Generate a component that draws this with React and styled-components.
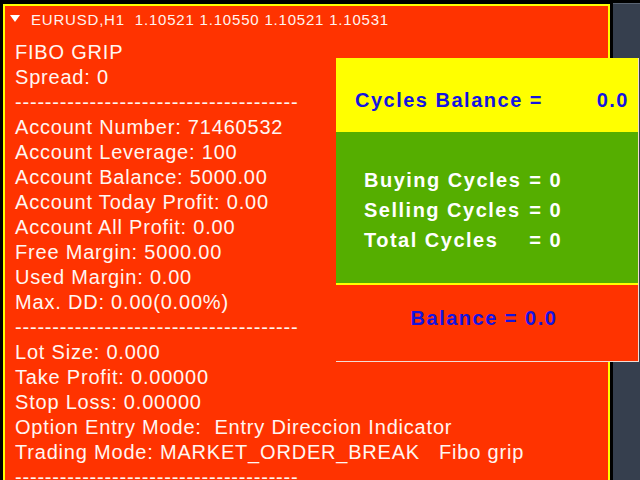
import React from "react";
import styled, { createGlobalStyle } from "styled-components";

const GlobalStyle = createGlobalStyle`
  html, body {
    margin: 0;
    padding: 0;
    background: #000;
    overflow: hidden;
  }
  #root {
    width: 640px;
    height: 480px;
  }
`;

const Page = styled.div`
  position: relative;
  display: flex;
  width: 640px;
  height: 480px;
  background: #000;
  overflow: hidden;
`;

const ChartArea = styled.div`
  flex: none;
  width: 613px;
  height: 100%;
  box-sizing: border-box;
  padding: 4px 3px 0 3px;
`;

const ChartWindow = styled.div`
  height: 100%;
  box-sizing: border-box;
  border: 2px solid #ffff00;
  border-bottom: none;
  background: #ff3300;
  display: flex;
  flex-direction: column;
  overflow: hidden;
`;

const Header = styled.div`
  flex: none;
  display: flex;
  align-items: center;
  height: 26px;
  padding-left: 5px;
  gap: 11px;
  font-family: "Liberation Sans", Arial, sans-serif;
  font-size: 15px;
  letter-spacing: 0.8px;
  color: #fff4f0;
  white-space: pre;
`;

const Triangle = styled.svg`
  width: 10px;
  height: 8px;
  flex: none;
`;

const InfoList = styled.div`
  flex: none;
  padding: 8px 0 0 10px;
  display: flex;
  flex-direction: column;
  font-family: "Liberation Sans", Arial, sans-serif;
  font-size: 20px;
  line-height: 25px;
  letter-spacing: 0.8px;
  color: #fff6f2;
  white-space: pre;
`;

const InfoLine = styled.div`
  flex: none;
  height: 25px;
`;

const SideStrip = styled.div`
  flex: 1;
  background: #363f4e;
  border-top: 1px solid #5a6473;
  margin-top: 3px;
`;

const Overlay = styled.div`
  position: absolute;
  left: 336px;
  top: 58px;
  width: 302px;
  display: flex;
  flex-direction: column;
  border-right: 1px solid #f3ddd4;
  border-bottom: 1px solid #f3ddd4;
  font-family: "Liberation Sans", Arial, sans-serif;
  font-weight: bold;
  font-size: 20px;
  letter-spacing: 1.5px;
`;

const BalanceBar = styled.div`
  height: 74px;
  box-sizing: border-box;
  background: #ffff00;
  padding: 30px 9px 0 19px;
  display: flex;
  justify-content: space-between;
  line-height: 24px;
  color: #1414e0;
`;

const CyclesBox = styled.div`
  height: 153px;
  box-sizing: border-box;
  background: #55ae00;
  border-bottom: 2px solid #ffff00;
  padding: 33px 0 0 28px;
  display: grid;
  grid-template-columns: auto auto;
  justify-content: start;
  align-content: start;
  column-gap: 8px;
  line-height: 30px;
  color: #ffffff;
`;

const Cell = styled.div`
  white-space: pre;
`;

const TotalBox = styled.div`
  height: 76px;
  box-sizing: border-box;
  background: #ff3300;
  padding: 21px 6px 0 0;
  text-align: center;
  line-height: 24px;
  color: #1414e0;
`;

const DASHES = "-".repeat(38);

const lines = [
  "FIBO GRIP",
  "Spread: 0",
  DASHES,
  "Account Number: 71460532",
  "Account Leverage: 100",
  "Account Balance: 5000.00",
  "Account Today Profit: 0.00",
  "Account All Profit: 0.00",
  "Free Margin: 5000.00",
  "Used Margin: 0.00",
  "Max. DD: 0.00(0.00%)",
  DASHES,
  "Lot Size: 0.000",
  "Take Profit: 0.00000",
  "Stop Loss: 0.00000",
  "Option Entry Mode:  Entry Direccion Indicator",
  "Trading Mode: MARKET_ORDER_BREAK   Fibo grip",
  DASHES,
];

const cycles = [
  ["Buying Cycles", "= 0"],
  ["Selling Cycles", "= 0"],
  ["Total Cycles", "= 0"],
];

export default function App() {
  return (
    <>
      <GlobalStyle />
      <Page>
        <ChartArea>
          <ChartWindow>
            <Header>
              <Triangle viewBox="0 0 10 8">
                <polygon points="0,0 10,0 5,7" fill="#ffffff" />
              </Triangle>
              <span>EURUSD,H1  1.10521 1.10550 1.10521 1.10531</span>
            </Header>
            <InfoList>
              {lines.map((l, i) => (
                <InfoLine key={i}>{l}</InfoLine>
              ))}
            </InfoList>
          </ChartWindow>
        </ChartArea>
        <SideStrip />
        <Overlay>
          <BalanceBar>
            <span>Cycles Balance =</span>
            <span>0.0</span>
          </BalanceBar>
          <CyclesBox>
            {cycles.map(([label, val]) => (
              <React.Fragment key={label}>
                <Cell>{label}</Cell>
                <Cell>{val}</Cell>
              </React.Fragment>
            ))}
          </CyclesBox>
          <TotalBox>Balance = 0.0</TotalBox>
        </Overlay>
      </Page>
    </>
  );
}
